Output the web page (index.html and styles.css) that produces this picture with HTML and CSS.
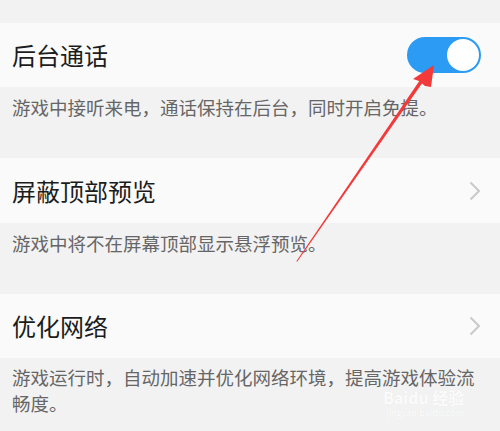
FILE: index.html
```
<!DOCTYPE html>
<html lang="zh-CN">
<head>
<meta charset="utf-8">
<link rel="stylesheet" href="styles.css">
</head>
<body>
<div class="page">
  <div class="spacer"></div>
  <div class="row">
    <span class="title">后台通话</span>
    <span class="switch"><span class="knob"></span></span>
  </div>
  <div class="desc">游戏中接听来电，通话保持在后台，同时开启免提。</div>
  <div class="row row-b">
    <span class="title">屏蔽顶部预览</span>
    <svg class="chev" width="12" height="20" viewBox="0 0 12 20"><path d="M1.5 1.5 L10 10 L1.5 18.5" fill="none" stroke="#c9c9c9" stroke-width="2"/></svg>
  </div>
  <div class="desc">游戏中将不在屏幕顶部显示悬浮预览。</div>
  <div class="row">
    <span class="title">优化网络</span>
    <svg class="chev" width="12" height="20" viewBox="0 0 12 20"><path d="M1.5 1.5 L10 10 L1.5 18.5" fill="none" stroke="#c9c9c9" stroke-width="2"/></svg>
  </div>
  <div class="desc desc-c">游戏运行时，自动加速并优化网络环境，提高游戏体验流畅度。</div>

  <svg class="arrow" width="500" height="431" viewBox="0 0 500 431">
    <polygon points="297,262 296.5,261 420,80 423,82" fill="#f23a3a"/>
    <polygon points="434,65 413,79 419,81 425,86 431,87" fill="#f23a3a"/>
  </svg>
  <div class="mark">
    <div class="mark-big">Baidu 经验</div>
    <div class="mark-small">jingyan.baidu.com</div>
  </div>
</div>
</body>
</html>
```
FILE: styles.css
```
html, body {
  margin: 0;
  padding: 0;
}
body {
  background: #f2f2f2;
  font-family: "Noto Sans CJK SC", "Noto Sans", sans-serif;
}
.page {
  position: relative;
  width: 500px;
  height: 431px;
  overflow: hidden;
}
.spacer {
  height: 23px;
}
.row {
  height: 64px;
  background: #fafafa;
  display: flex;
  align-items: center;
  justify-content: space-between;
  padding: 0 19px 0 12px;
}
.row-b {
  height: 65px;
}
.title {
  font-size: 24px;
  color: #1c1c1c;
  line-height: 1;
}
.switch {
  width: 74px;
  height: 36px;
  border-radius: 18px;
  background: #2b9bf4;
  display: flex;
  align-items: center;
  justify-content: flex-end;
  padding-right: 2px;
  box-sizing: border-box;
}
.knob {
  width: 32px;
  height: 32px;
  border-radius: 50%;
  background: #ffffff;
}
.chev {
  display: block;
}
.desc {
  height: 71px;
  box-sizing: border-box;
  padding: 7px 12px 0 12px;
  font-size: 18.5px;
  line-height: 26px;
  color: #666666;
}
.desc-c {
  padding-top: 6px;
  height: 73px;
}
.arrow {
  position: absolute;
  left: 0;
  top: 0;
}
.mark {
  position: absolute;
  left: 383px;
  top: 389px;
  display: flex;
  flex-direction: column;
  gap: 2px;
  color: rgba(255, 255, 255, 0.9);
  font-family: "Noto Sans CJK SC", sans-serif;
  text-shadow: 0 0 1px rgba(0, 0, 0, 0.06);
}
.mark-big {
  font-size: 16px;
  line-height: 17px;
  font-weight: bold;
}
.mark-small {
  font-size: 9px;
  line-height: 10px;
  margin-left: 3px;
}
```
